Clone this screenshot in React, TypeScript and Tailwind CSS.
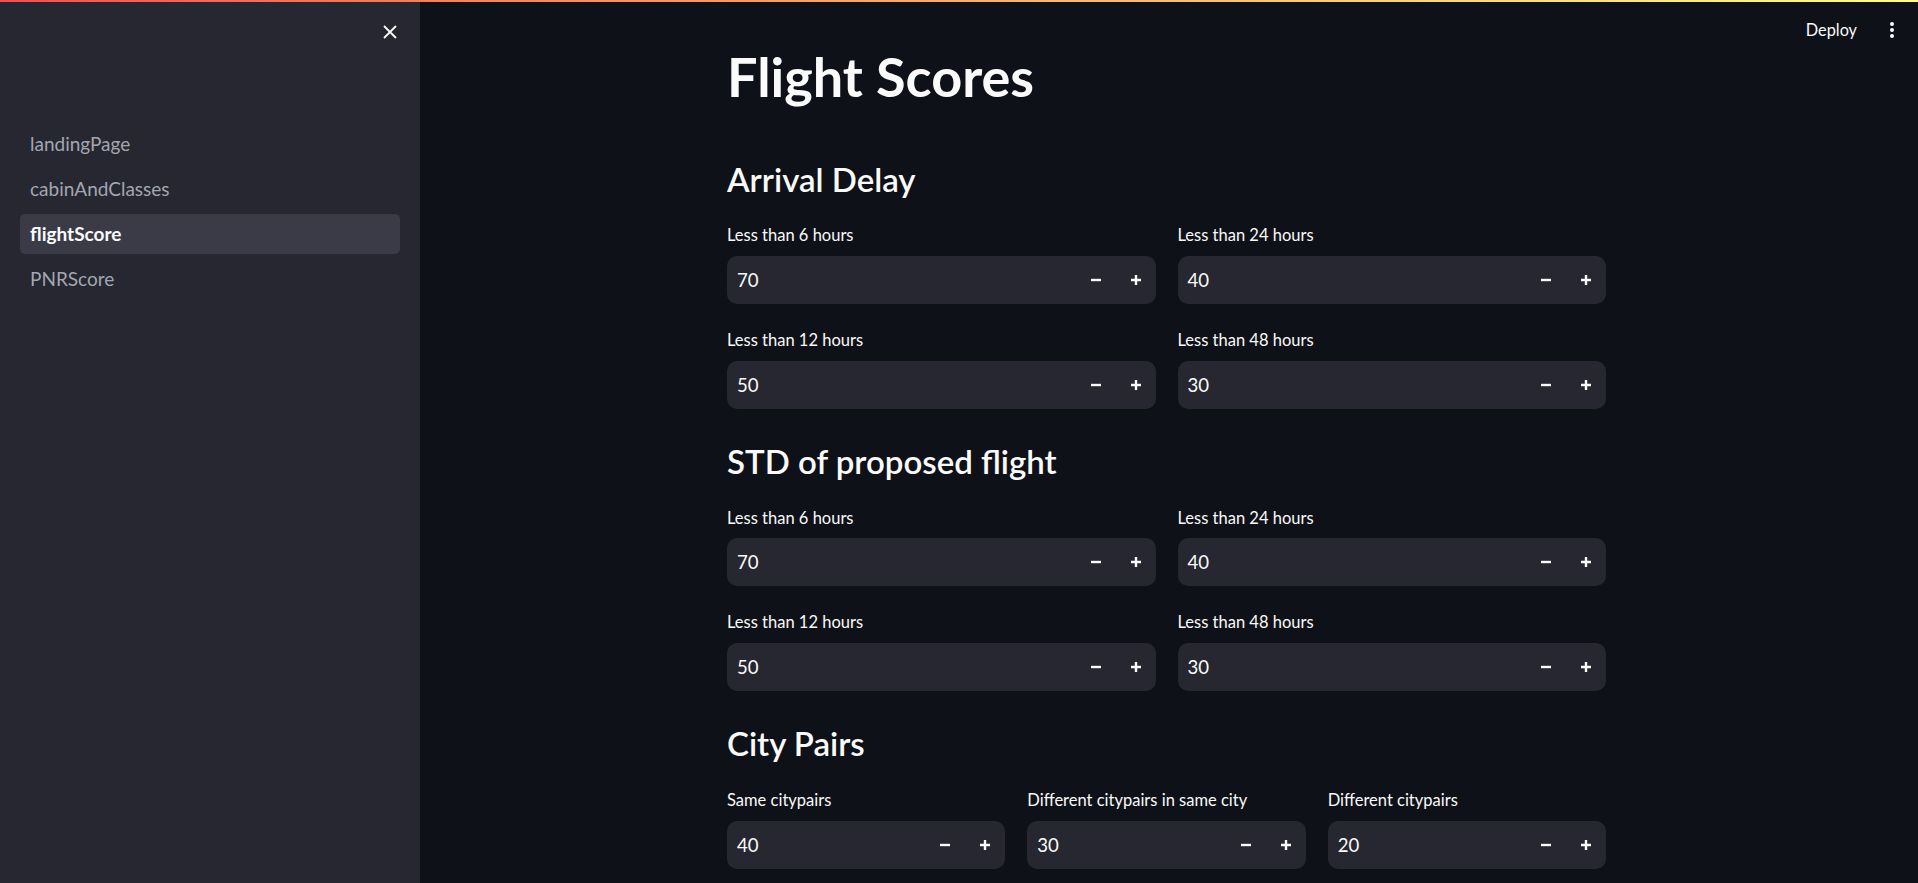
import React from "react";

const navItems = ["landingPage", "cabinAndClasses", "flightScore", "PNRScore"];

const sections = [
  {
    title: "Arrival Delay",
    cols: 2,
    fields: [
      { label: "Less than 6 hours", value: 70 },
      { label: "Less than 24 hours", value: 40 },
      { label: "Less than 12 hours", value: 50 },
      { label: "Less than 48 hours", value: 30 },
    ],
  },
  {
    title: "STD of proposed flight",
    cols: 2,
    fields: [
      { label: "Less than 6 hours", value: 70 },
      { label: "Less than 24 hours", value: 40 },
      { label: "Less than 12 hours", value: 50 },
      { label: "Less than 48 hours", value: 30 },
    ],
  },
  {
    title: "City Pairs",
    cols: 3,
    fields: [
      { label: "Same citypairs", value: 40 },
      { label: "Different citypairs in same city", value: 30 },
      { label: "Different citypairs", value: 20 },
    ],
  },
];

function NumberInput({ label, value }: { label: string; value: number }) {
  return (
    <div className="flex flex-col">
      <label className="text-[16.5px] leading-[1.2] text-[#fafafa]">{label}</label>
      <div className="mt-[10px] flex h-[48px] items-center rounded-[10px] bg-[#262730]">
        <span className="flex-1 pl-[10px] pt-[2px] text-[18.6px] text-[#fafafa]">{value}</span>
        <button className="flex h-full w-[40px] items-center justify-center">
          <svg width="10" height="10" viewBox="0 0 10 10">
            <path d="M0 5h10" stroke="#fafafa" strokeWidth={2.4} />
          </svg>
        </button>
        <button className="flex h-full w-[40px] items-center justify-center">
          <svg width="10" height="10" viewBox="0 0 10 10">
            <path d="M0 5h10M5 0v10" stroke="#fafafa" strokeWidth={2.4} />
          </svg>
        </button>
      </div>
    </div>
  );
}

export default function App() {
  return (
    <div className="flex h-[883px] w-full flex-col overflow-hidden bg-[#0e1117] font-['Lato',sans-serif] text-[#fafafa]">
      <div className="h-[2px] w-full bg-gradient-to-r from-[#ff4b4b] to-[#fffd80]" />
      <div className="flex flex-1">
        {/* sidebar */}
        <aside className="flex w-[420px] shrink-0 flex-col bg-[#262730] px-[20px]">
          <div className="flex h-[60px] items-center justify-end pr-[3px]">
            <svg width="14" height="14" viewBox="0 0 14 14">
              <path d="M1 1l12 12M13 1L1 13" stroke="#fafafa" strokeWidth={1.8} />
            </svg>
          </div>
          <nav className="mt-[62px] flex flex-col gap-[5px]">
            {navItems.map((item) => (
              <div
                key={item}
                className={`flex h-[40px] items-center rounded-[5px] px-[10px] text-[19px] ${
                  item === "flightScore"
                    ? "bg-[#3a3b47] font-bold text-[#fafafa]"
                    : "text-[#a3a6b0]"
                }`}
              >
                {item}
              </div>
            ))}
          </nav>
        </aside>

        {/* main */}
        <main className="relative flex-1">
          <div className="absolute right-0 top-0 flex h-[56px] items-center pr-[24px]">
            <span className="text-[16.3px] text-[#fafafa]">Deploy</span>
            <svg className="ml-[33px]" width="4" height="16" viewBox="0 0 4 16">
              <circle cx="2" cy="2" r="2" fill="#fafafa" />
              <circle cx="2" cy="8" r="2" fill="#fafafa" />
              <circle cx="2" cy="14" r="2" fill="#fafafa" />
            </svg>
          </div>

          <div className="ml-[307px] w-[879px] pt-[43px]">
            <h1 className="text-[54px] font-bold leading-[1.2]">Flight Scores</h1>
            {sections.map((s, i) => (
              <section key={s.title} className={i === 0 ? "mt-[50px]" : "mt-[33px]"}>
                <h3 className="text-[33px] font-semibold leading-[1.2]">{s.title}</h3>
                <div
                  className={`mt-[27px] grid gap-x-[22px] gap-y-[27px] ${
                    s.cols === 3 ? "grid-cols-3" : "grid-cols-2"
                  }`}
                >
                  {s.fields.map((f) => (
                    <NumberInput key={s.title + f.label} label={f.label} value={f.value} />
                  ))}
                </div>
              </section>
            ))}
          </div>
        </main>
      </div>
    </div>
  );
}
